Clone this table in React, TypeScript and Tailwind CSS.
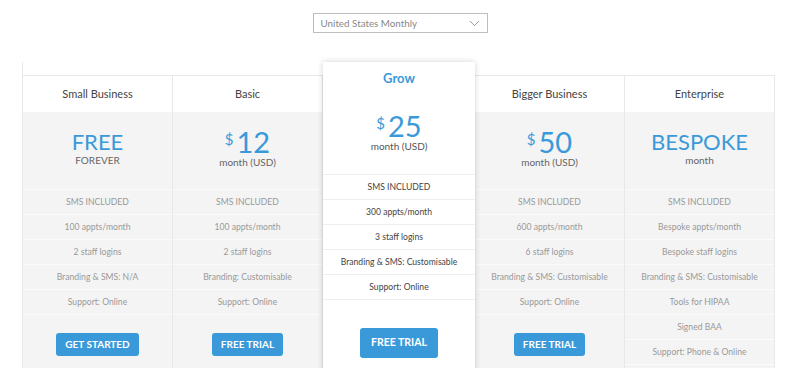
import { ChevronDown } from 'lucide-react'

interface Plan {
  name: string
  price?: string
  word?: string
  unit: string
  features: string[]
  cta?: string
}

const plans: Plan[] = [
  {
    name: 'Small Business',
    word: 'FREE',
    unit: 'FOREVER',
    features: ['SMS INCLUDED', '100 appts/month', '2 staff logins', 'Branding & SMS: N/A', 'Support: Online'],
    cta: 'GET STARTED',
  },
  {
    name: 'Basic',
    price: '12',
    unit: 'month (USD)',
    features: ['SMS INCLUDED', '100 appts/month', '2 staff logins', 'Branding: Customisable', 'Support: Online'],
    cta: 'FREE TRIAL',
  },
  {
    name: 'Grow',
    price: '25',
    unit: 'month (USD)',
    features: ['SMS INCLUDED', '300 appts/month', '3 staff logins', 'Branding & SMS: Customisable', 'Support: Online'],
    cta: 'FREE TRIAL',
  },
  {
    name: 'Bigger Business',
    price: '50',
    unit: 'month (USD)',
    features: ['SMS INCLUDED', '600 appts/month', '6 staff logins', 'Branding & SMS: Customisable', 'Support: Online'],
    cta: 'FREE TRIAL',
  },
  {
    name: 'Enterprise',
    word: 'BESPOKE',
    unit: 'month',
    features: [
      'SMS INCLUDED',
      'Bespoke appts/month',
      'Bespoke staff logins',
      'Branding & SMS: Customisable',
      'Tools for HIPAA',
      'Signed BAA',
      'Support: Phone & Online',
    ],
  },
]

function PriceFigure({ plan }: { plan: Plan }) {
  if (plan.word) {
    return <div className="text-[22px] leading-[24px] text-[#3a9ad9]">{plan.word}</div>
  }
  return (
    <div className="flex items-start justify-center text-[#3a9ad9]">
      <span className="mr-[3px] mt-[5px] text-[15px] leading-none">$</span>
      <span className="text-[29px] leading-[29px]">{plan.price}</span>
    </div>
  )
}

function PlanColumn({ plan }: { plan: Plan }) {
  return (
    <div className="mt-[13px] flex w-[150px] flex-col border-t border-r border-[#e8e8e8] bg-[#f4f4f4]">
      <div className="flex h-[36px] items-center justify-center bg-white text-[11px] text-[#444]">
        {plan.name}
      </div>
      <div className={`flex h-[77px] flex-col items-center ${plan.word ? 'pt-[18px]' : 'pt-[15px]'}`}>
        <PriceFigure plan={plan} />
        <div className="text-[10px] leading-[13px] text-[#666]">{plan.unit}</div>
      </div>
      {plan.features.map((f) => (
        <div
          key={f}
          className="flex h-[25px] items-center justify-center border-t border-[#fbfbfb] text-[8.6px] text-[#999]"
        >
          {f}
        </div>
      ))}
      {plan.cta ? (
        <div className="flex h-[80px] items-start justify-center border-t border-[#fbfbfb] pt-[18px]">
          <button className="h-[23px] rounded-[3px] bg-[#3a9ad9] px-[9px] text-[10px] font-bold text-white">
            {plan.cta}
          </button>
        </div>
      ) : (
        <div className="h-[20px] border-t border-[#fbfbfb]" />
      )}
    </div>
  )
}

function GrowColumn({ plan }: { plan: Plan }) {
  return (
    <div className="relative z-10 flex w-[152px] flex-col bg-white shadow-[0_0_6px_rgba(0,0,0,0.18)]">
      <div className="flex h-[34px] items-center justify-center text-[13px] font-bold text-[#3a9ad9]">
        {plan.name}
      </div>
      <div className="flex h-[78px] flex-col items-center pt-[15px]">
        <PriceFigure plan={plan} />
        <div className="text-[10px] leading-[13px] text-[#555]">{plan.unit}</div>
      </div>
      {plan.features.map((f) => (
        <div
          key={f}
          className="flex h-[25px] items-center justify-center border-t border-[#efefef] text-[8.6px] text-[#444]"
        >
          {f}
        </div>
      ))}
      <div className="flex h-[90px] items-start justify-center border-t border-[#efefef] pt-[28px]">
        <button className="h-[30px] w-[78px] rounded-[3px] bg-[#3a9ad9] text-[10.5px] font-bold text-white">
          {plan.cta}
        </button>
      </div>
    </div>
  )
}

export default function App() {
  return (
    <div className="h-[368px] w-[800px] overflow-hidden bg-white font-['Lato',sans-serif]">
      {/* Region picker */}
      <div className="flex justify-center pt-[13px]">
        <div className="flex h-[20px] w-[175px] items-center justify-between border border-[#bdbdbd] pl-[7px] pr-[4px] text-[9.8px] text-[#888]">
          <span>United States Monthly</span>
          <ChevronDown size={17} strokeWidth={1.1} className="text-[#777]" />
        </div>
      </div>

      {/* Plans */}
      <div className="mt-[29px] flex items-start pl-[22px]">
        <div className="flex border-l border-[#e8e8e8]">
          <PlanColumn plan={plans[0]} />
          <PlanColumn plan={plans[1]} />
        </div>
        <GrowColumn plan={plans[2]} />
        <PlanColumn plan={plans[3]} />
        <PlanColumn plan={plans[4]} />
      </div>
    </div>
  )
}
